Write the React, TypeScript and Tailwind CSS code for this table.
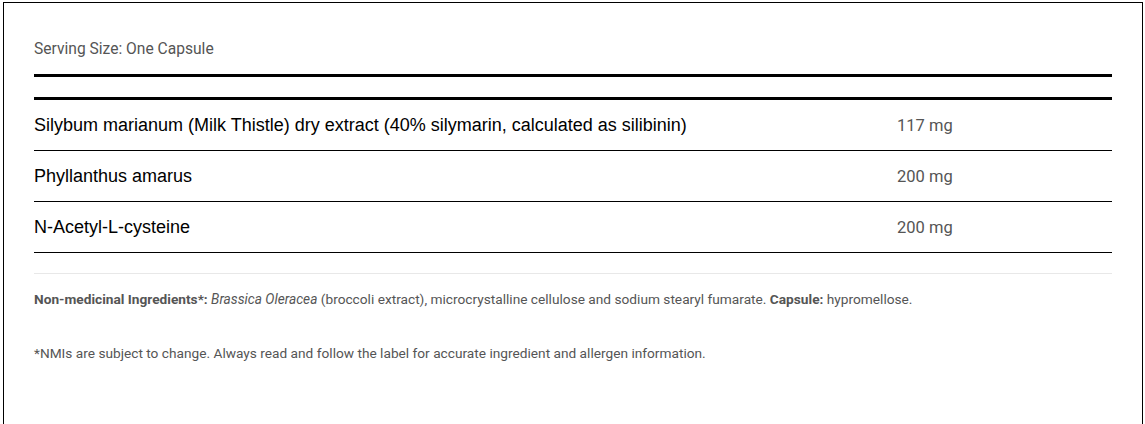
const ROWS = [
  {
    name: "Silybum marianum (Milk Thistle) dry extract (40% silymarin, calculated as silibinin)",
    amount: "117 mg",
  },
  { name: "Phyllanthus amarus", amount: "200 mg" },
  { name: "N-Acetyl-L-cysteine", amount: "200 mg" },
];

const body = { fontFamily: "Roboto, 'Liberation Sans', sans-serif" };
const arial = { fontFamily: "'Liberation Sans', Arial, sans-serif" };

export default function App() {
  return (
    <div className="h-[424px] overflow-hidden bg-white pl-[3px] pr-[2px] pt-[2px]">
      <div className="h-[440px] border-l border-r border-t border-black px-[30px]" style={body}>
        <div className="pt-[36px] text-[15.6px] leading-[20px] text-[#555]">Serving Size: One Capsule</div>

        <div className="mt-[15px] h-[26px] border-b-[3px] border-t-[3px] border-black" />

        <div className="flex flex-col">
          {ROWS.map((r) => (
            <div key={r.name} className="flex h-[51px] items-center border-b border-black">
              <span className="flex-1 text-[18px] leading-[22px] text-black" style={arial}>
                {r.name}
              </span>
              <span className="w-[215px] pt-[1px] text-[16.5px] leading-[22px] text-[#555]">{r.amount}</span>
            </div>
          ))}
        </div>

        <div className="mt-[20px] border-t border-[#e8e8e8]" />

        <p className="mt-[15px] text-[13.7px] leading-[20px] text-[#555]">
          <b className="font-bold">Non-medicinal Ingredients*:</b> <i>Brassica Oleracea</i> (broccoli extract),
          microcrystalline cellulose and sodium stearyl fumarate. <b className="font-bold">Capsule:</b> hypromellose.
        </p>

        <p className="mt-[34px] text-[13.7px] leading-[20px] text-[#555]">
          *NMIs are subject to change. Always read and follow the label for accurate ingredient and allergen
          information.
        </p>
      </div>
    </div>
  );
}
